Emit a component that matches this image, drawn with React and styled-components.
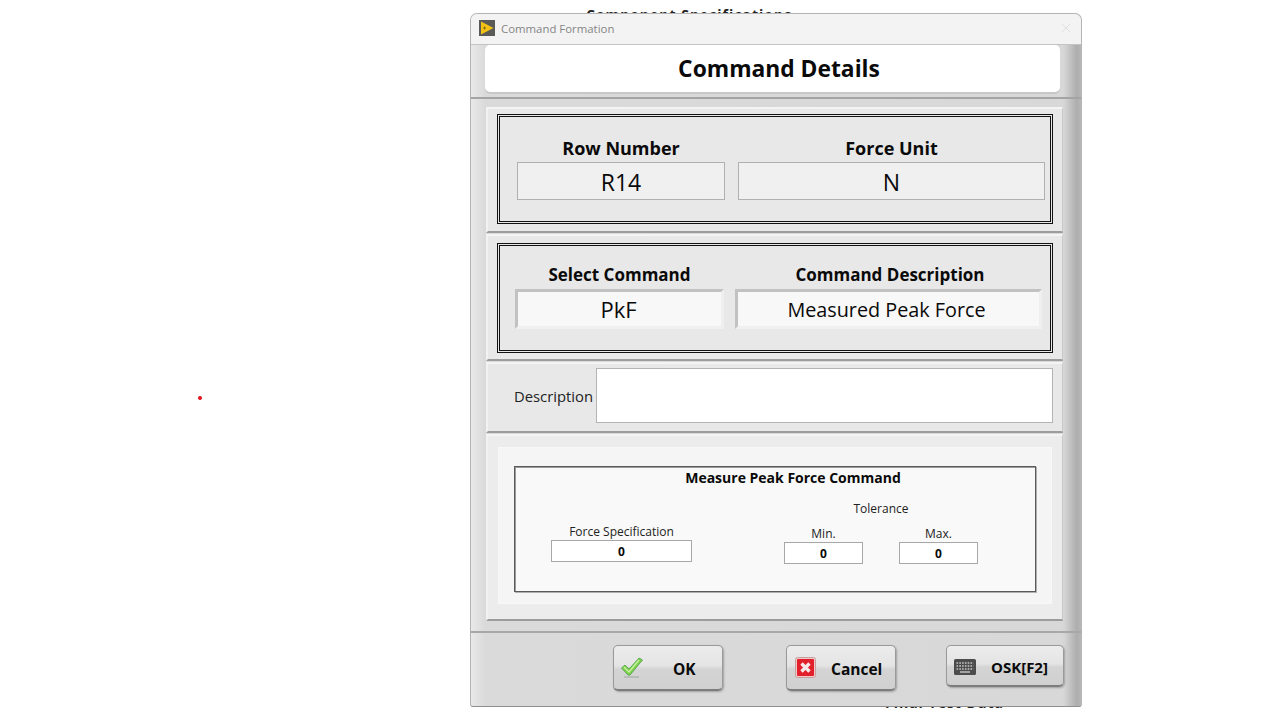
import React from "react"
import styled, { createGlobalStyle } from "styled-components"

const GlobalStyle = createGlobalStyle`
html, body {
  margin: 0;
  padding: 0;
  background: #fff;
}
body {
  font-family: "Open Sans", "Noto Sans", sans-serif;
  color: #0a0a0a;
}
`

const Page = styled.div`
position: relative;
width: 1280px;
height: 720px;
overflow: hidden;
padding: 13px 0 0 470px;
box-sizing: border-box;
`

// text of the page behind the dialog, only its edges show
const BehindText = styled.div`
position: absolute;
left: ${p => p.$left}px;
top: ${p => p.$top}px;
font-size: 14px;
font-weight: 700;
letter-spacing: 1px;
line-height: 14px;
white-space: nowrap;
color: #222;
`

const RedDot = styled.div`
position: absolute;
left: 198px;
top: 396px;
width: 4px;
height: 4px;
border-radius: 50%;
background: #e8101f;
`

const Window = styled.div`
position: relative;
width: 612px;
height: 694px;
box-sizing: border-box;
display: flex;
flex-direction: column;
border: 1px solid #b4b4b4;
border-bottom-color: #8f8f8f;
border-radius: 7px 7px 3px 3px;
background: linear-gradient(90deg, #e9e9e9 0, #dadada 14px, #d8d8d8 591px, #d6d6d6 593px, #adadad 606px, #b8b8b8 100%);
overflow: hidden;
`

const TitleBar = styled.div`
height: 30px;
flex: none;
box-sizing: content-box;
display: flex;
align-items: center;
padding: 0 8px;
gap: 6px;
background: #f3f3f3;
border-bottom: 1px solid #c4c4c4;
`

const TitleText = styled.span`
font-size: 11.4px;
line-height: 14px;
margin-bottom: 1px;
color: #858585;
`

const TitleIcon = styled.svg`
width: 16px;
height: 16px;
margin-bottom: 2px;
`

const CloseMark = styled.svg`
width: 10px;
height: 10px;
margin-left: auto;
margin-right: 2px;
margin-bottom: 2px;
`

const HeaderZone = styled.div`
height: 54px;
flex: none;
box-sizing: border-box;
padding: 0 21px 0 14px;
border-bottom: 2px solid #a4a4a4;
`

const HeaderBox = styled.div`
height: 47px;
box-sizing: border-box;
padding-left: 13px;
display: flex;
align-items: center;
justify-content: center;
background: #fff;
border-radius: 5px;
font-size: 22.8px;
font-weight: 700;
box-shadow: 0 2px 0 #c8c8c8;
`

const Content = styled.div`
flex: 1;
display: flex;
flex-direction: column;
gap: 1px;
padding: 8px 18px 0 15px;
`

const Panel = styled.section`
box-sizing: border-box;
height: ${p => p.$height}px;
padding: ${p => p.$pad};
background: ${p => p.$bg || "#e8e8e8"};
border-top: 2px solid #f4f4f4;
border-left: 2px solid #f2f2f2;
border-right: 1px solid #c8c8c8;
border-bottom: 2px solid #9c9c9c;
display: flex;
`

const DoubleFrame = styled.div`
flex: 1;
box-sizing: border-box;
border: 3px double #111;
padding: ${p => p.$pad};
display: grid;
grid-template-columns: ${p => p.$columns};
column-gap: ${p => p.$gap}px;
align-content: start;
`

const Field = styled.div`
display: flex;
flex-direction: column;
align-items: center;
`

const FieldLabel = styled.div`
font-size: ${p => p.$size}px;
font-weight: 700;
line-height: 22px;
height: ${p => p.$height}px;
padding-left: ${p => p.$shift || 0}px;
`

const ReadValue = styled.div`
align-self: stretch;
box-sizing: border-box;
height: 38px;
padding-top: 2px;
display: flex;
align-items: center;
justify-content: center;
font-size: 23px;
background: #f0f0f0;
border: 1px solid #b0b0b0;
`

const SunkenValue = styled.div`
align-self: stretch;
box-sizing: border-box;
height: 40px;
padding-right: ${p => p.$shift}px;
display: flex;
align-items: center;
justify-content: center;
font-size: ${p => p.$size}px;
background: #f8f8f8;
border-top: 3px solid #c2c2c2;
border-left: 3px solid #c2c2c2;
border-right: 3px solid #efefef;
border-bottom: 3px solid #f0f0f0;
`

const DescriptionLabel = styled.div`
font-size: 14.8px;
line-height: 20px;
color: #222;
align-self: center;
margin: 0 3px 0 0;
`

const DescriptionInput = styled.div`
flex: 1;
background: #fff;
border: 1px solid #b4b4b4;
`

const InnerFrame = styled.div`
flex: 1;
display: flex;
padding: 18px 15px 11px 15px;
background: #f5f5f5;
border: 1px solid #f8f8f8;
`

const CommandBox = styled.div`
flex: 1;
box-sizing: border-box;
background: #f9f9f9;
border: 1px solid #5a5a5a;
box-shadow: inset 1px 1px 0 #9a9a9a, 1px 1px 0 #b0b0b0;
display: flex;
flex-direction: column;
`

const CommandTitle = styled.div`
font-size: 14px;
font-weight: 700;
line-height: 20px;
text-align: center;
padding: 1px 0 0 36px;
`

const CommandRow = styled.div`
display: flex;
align-items: flex-end;
padding: 12px 0 0 36px;
`

const NumberField = styled.div`
width: ${p => p.$width}px;
margin-right: ${p => p.$after}px;
margin-bottom: ${p => p.$lift}px;
display: flex;
flex-direction: column;
align-items: center;
`

const SmallLabel = styled.div`
font-size: 12px;
line-height: 18px;
margin-bottom: -1px;
color: #222;
`

const NumberInput = styled.div`
align-self: stretch;
box-sizing: border-box;
height: 22px;
display: flex;
align-items: center;
justify-content: center;
font-size: 12px;
font-weight: 700;
background: #fff;
border: 1px solid #a8a8a8;
`

const ToleranceGroup = styled.div`
display: flex;
flex-direction: column;
align-items: center;
`

const ToleranceRow = styled.div`
display: flex;
gap: 36px;
margin-top: 8px;
`

const Footer = styled.div`
flex: none;
height: 75px;
box-sizing: border-box;
margin-top: 10px;
padding: 12px 16px 0 142px;
display: flex;
align-items: flex-start;
border-top: 2px solid #a8a8a8;
`

const Button = styled.div`
width: ${p => p.$width}px;
height: ${p => p.$height}px;
margin-right: ${p => p.$after}px;
box-sizing: border-box;
display: flex;
align-items: center;
padding-left: ${p => p.$padLeft}px;
border: 1px solid #9a9a9a;
border-bottom: 2px solid #7d7d7d;
border-radius: 5px;
background: linear-gradient(#ececec 0, #e4e4e4 46%, #d4d4d4 54%, #d0d0d0 100%);
box-shadow: 1px 1px 2px #a0a0a0;
`

const ButtonLabel = styled.span`
margin-left: ${p => p.$gap}px;
padding-top: 2px;
font-size: ${p => p.$size}px;
font-weight: 700;
`

const KeyboardSvg = styled.svg`
width: 22px;
height: 16px;
margin-top: 2px;
`

const LabviewIcon = () => (
  <TitleIcon viewBox="0 0 16 16">
    <rect width="16" height="16" fill="#5a5a58" />
    <path d="M2 1.5 L14.5 8 L2 14.5 Z" fill="#f2c316" />
    <path d="M4 8 H7 M5.5 6.5 V9.5" stroke="#8a6a10" strokeWidth="1" />
  </TitleIcon>
)

const CheckIcon = () => (
  <svg width="22" height="21" viewBox="0 0 22 21">
    <path d="M0.5 11 L4 8 L8 12 L18 1 L21.5 3 L9 18 L7 18 Z" fill="#7fd14a" stroke="#4a9e45" strokeWidth="0.8" />
    <path d="M3 10 L8 15 L18 3" fill="none" stroke="#c8f0a4" strokeWidth="1.4" />
    <path d="M3 20 H18" stroke="#9aa69a" strokeWidth="1" />
  </svg>
)

const CancelIcon = () => (
  <svg width="21" height="21" viewBox="0 0 21 21">
    <rect x="0.5" y="0.5" width="20" height="20" rx="2" fill="#f0c8c8" stroke="#c9a0a0" />
    <rect x="2" y="2" width="17" height="17" rx="1" fill="#e2202c" />
    <path d="M6.5 6.5 L14.5 14.5 M14.5 6.5 L6.5 14.5" stroke="#f8e8e8" strokeWidth="3.4" />
  </svg>
)

const KeyboardIcon = () => (
  <KeyboardSvg viewBox="0 0 22 16">
    <rect width="22" height="16" rx="1.5" fill="#4c4c4c" />
    <path d="M2.5 4 H19.5 M2.5 7 H19.5" stroke="#c8c8c8" strokeWidth="1.4" strokeDasharray="1.6 1.2" />
    <path d="M2.5 10 H19.5" stroke="#c8c8c8" strokeWidth="1.4" strokeDasharray="1.6 1.2" />
    <path d="M6 13 H16" stroke="#c8c8c8" strokeWidth="1.4" />
  </KeyboardSvg>
)

const App = () => {
  return (
    <Page>
      <GlobalStyle />
      <BehindText $left={586} $top={8}>Component Specifications</BehindText>
      <BehindText $left={885} $top={696}>Final Test Data</BehindText>
      <RedDot />
      <Window>
        <TitleBar>
          <LabviewIcon />
          <TitleText>Command Formation</TitleText>
          <CloseMark viewBox="0 0 10 10">
            <path d="M1 1 L9 9 M9 1 L1 9" stroke="#dedede" strokeWidth="1" />
          </CloseMark>
        </TitleBar>
        <HeaderZone>
          <HeaderBox>Command Details</HeaderBox>
        </HeaderZone>
        <Content>
          <Panel $height={126} $pad="5px 9px 7px 9px">
            <DoubleFrame $pad="20px 5px 0 17px" $columns="208px 307px" $gap={13}>
              <Field>
                <FieldLabel $size={18} $height={25}>Row Number</FieldLabel>
                <ReadValue>R14</ReadValue>
              </Field>
              <Field>
                <FieldLabel $size={18} $height={25}>Force Unit</FieldLabel>
                <ReadValue>N</ReadValue>
              </Field>
            </DoubleFrame>
          </Panel>
          <Panel $height={127} $pad="7px 9px 6px 9px">
            <DoubleFrame $pad="18px 8px 0 15px" $columns="209px 307px" $gap={11}>
              <Field>
                <FieldLabel $size={17} $height={25}>Select Command</FieldLabel>
                <SunkenValue $size={22} $shift={2}>PkF</SunkenValue>
              </Field>
              <Field>
                <FieldLabel $size={17} $height={25} $shift={3}>Command Description</FieldLabel>
                <SunkenValue $size={19.8} $shift={4}>Measured Peak Force</SunkenValue>
              </Field>
            </DoubleFrame>
          </Panel>
          <Panel $height={71} $pad="4px 9px 8px 26px">
            <DescriptionLabel>Description</DescriptionLabel>
            <DescriptionInput />
          </Panel>
          <Panel $height={187} $bg="#ececec" $pad="11px 10px 15px 10px">
            <InnerFrame>
              <CommandBox>
                <CommandTitle>Measure Peak Force Command</CommandTitle>
                <CommandRow>
                  <NumberField $width={141} $after={92} $lift={2}>
                    <SmallLabel>Force Specification</SmallLabel>
                    <NumberInput>0</NumberInput>
                  </NumberField>
                  <ToleranceGroup>
                    <SmallLabel>Tolerance</SmallLabel>
                    <ToleranceRow>
                      <NumberField $width={79} $after={0} $lift={0}>
                        <SmallLabel>Min.</SmallLabel>
                        <NumberInput>0</NumberInput>
                      </NumberField>
                      <NumberField $width={79} $after={0} $lift={0}>
                        <SmallLabel>Max.</SmallLabel>
                        <NumberInput>0</NumberInput>
                      </NumberField>
                    </ToleranceRow>
                  </ToleranceGroup>
                </CommandRow>
              </CommandBox>
            </InnerFrame>
          </Panel>
        </Content>
        <Footer>
          <Button $width={110} $height={46} $after={63} $padLeft={7}>
            <CheckIcon />
            <ButtonLabel $size={15.5} $gap={30}>OK</ButtonLabel>
          </Button>
          <Button $width={110} $height={46} $after={50} $padLeft={8}>
            <CancelIcon />
            <ButtonLabel $size={15.5} $gap={15}>Cancel</ButtonLabel>
          </Button>
          <Button $width={118} $height={42} $after={0} $padLeft={7}>
            <KeyboardIcon />
            <ButtonLabel $size={15} $gap={15}>OSK[F2]</ButtonLabel>
          </Button>
        </Footer>
      </Window>
    </Page>
  )
}

export default App
